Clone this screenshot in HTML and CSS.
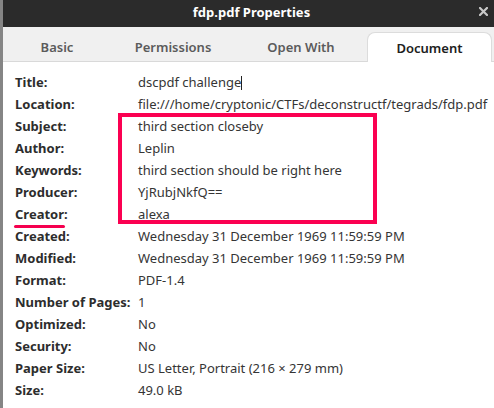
FILE: index.html
```html
<!DOCTYPE html>
<html>
<head>
<meta charset="utf-8">
<link rel="stylesheet" href="styles.css">
</head>
<body>
<div class="window">
  <header class="titlebar">
    <span class="title">fdp.pdf Properties</span>
    <svg class="close" width="9" height="9" viewBox="0 0 9 9"><path d="M1 1 L8 8 M8 1 L1 8" stroke="#c9c9c9" stroke-width="2.2" stroke-linecap="square"/></svg>
  </header>
  <nav class="tabs">
    <div class="tab tab-basic">Basic</div>
    <div class="tab tab-perm">Permissions</div>
    <div class="tab tab-open">Open With</div>
    <div class="tab tab-doc active">Document</div>
  </nav>
  <main class="content">
    <div class="props">
      <div class="label">Title:</div><div class="value">dscpdf challenge<span class="cursor"></span></div>
      <div class="label">Location:</div><div class="value">file:///home/cryptonic/CTFs/deconstructf/tegrads/fdp.pdf</div>
      <div class="label">Subject:</div><div class="value">third section closeby</div>
      <div class="label">Author:</div><div class="value">Leplin</div>
      <div class="label">Keywords:</div><div class="value">third section should be right here</div>
      <div class="label">Producer:</div><div class="value">YjRubjNkfQ==</div>
      <div class="label"><span class="marked">Creator</span>:</div><div class="value">alexa</div>
      <div class="label">Created:</div><div class="value">Wednesday 31 December 1969 11:59:59 PM</div>
      <div class="label">Modified:</div><div class="value">Wednesday 31 December 1969 11:59:59 PM</div>
      <div class="label">Format:</div><div class="value">PDF-1.4</div>
      <div class="label">Number of Pages:</div><div class="value">1</div>
      <div class="label">Optimized:</div><div class="value">No</div>
      <div class="label">Security:</div><div class="value">No</div>
      <div class="label">Paper Size:</div><div class="value">US Letter, Portrait (216 × 279 mm)</div>
      <div class="label">Size:</div><div class="value">49.0 kB</div>
    </div>
    <div class="highlight"></div>
  </main>
</div>
</body>
</html>
```
FILE: styles.css
```css
html, body {
  margin: 0;
  padding: 0;
  background: #ffffff;
}
body {
  width: 494px;
  height: 408px;
  overflow: hidden;
  font-family: "Noto Sans", "Open Sans", sans-serif;
}
.window {
  height: 408px;
  border-left: 3px solid #858585;
  display: flex;
  flex-direction: column;
  background: #ffffff;
}
.titlebar {
  height: 27px;
  background: #2b2b2b;
  color: #ffffff;
  display: flex;
  align-items: center;
  justify-content: center;
  position: relative;
  flex: none;
  box-sizing: border-box;
  padding-bottom: 3px;
}
.title {
  font-weight: 700;
  font-size: 13px;
  padding-left: 6px;
}
.close {
  position: absolute;
  right: 6px;
  top: 7px;
}
.tabs {
  height: 35px;
  background: #f0f0f0;
  border-bottom: 1px solid #d9d9d9;
  box-sizing: border-box;
  display: flex;
  align-items: flex-end;
  flex: none;
}
.tab {
  height: 29px;
  display: flex;
  align-items: center;
  justify-content: center;
  font-size: 13px;
  font-weight: 600;
  color: #5b5b5b;
  box-sizing: border-box;
  padding-top: 1px;
}
.tab-basic { width: 108px; }
.tab-perm { width: 124px; }
.tab-open { width: 132px; }
.tab-doc { width: 125px; }
.tab.active {
  background: #ffffff;
  color: #202020;
  border: 1px solid #dcdcdc;
  border-bottom: none;
  border-radius: 8px 8px 0 0;
  margin-bottom: -1px;
  height: 30px;
}
.content {
  position: relative;
  flex: 1;
  padding: 9px 0 0 12px;
}
.props {
  display: grid;
  grid-template-columns: 123px auto;
  grid-auto-rows: 22px;
  align-items: center;
  font-size: 13px;
  color: #323232;
}
.label {
  font-weight: 700;
  color: #2d2d2d;
}
.value {
  white-space: nowrap;
  color: #353535;
}
.cursor {
  display: inline-block;
  width: 1px;
  height: 14px;
  background: #222;
  vertical-align: -3px;
}
.marked {
  position: relative;
}
.marked::after {
  content: "";
  position: absolute;
  left: -1px;
  right: -1px;
  bottom: -5px;
  height: 3px;
  border-radius: 2px;
  background: #f5004f;
}
.highlight {
  position: absolute;
  left: 115px;
  top: 51px;
  width: 259px;
  height: 111px;
  box-sizing: border-box;
  border: 4px solid #fb0051;
  pointer-events: none;
}
```
